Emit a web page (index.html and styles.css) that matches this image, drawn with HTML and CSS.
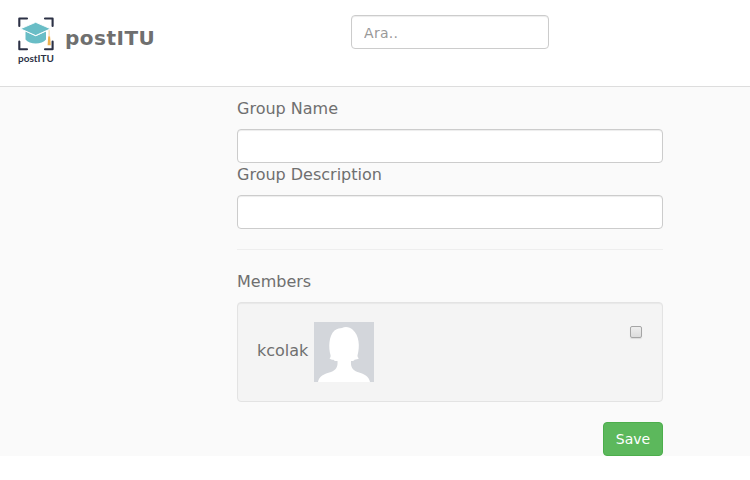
FILE: index.html
```html
<!DOCTYPE html>
<html lang="en">
<head>
<meta charset="utf-8">
<title>postITU</title>
<link rel="stylesheet" href="styles.css">
</head>
<body>
<header class="navbar">
  <a class="brand">
    <svg class="logo" width="38" height="50" viewBox="0 0 38 50">
      <path d="M2.300 10V2.500H10M28 2.500h7.600v7.500M2.300 25.500v7.800H10M28 33.300h7.600v-7.800" fill="none" stroke="#2c3145" stroke-width="2.100" stroke-linecap="round" stroke-linejoin="round"/>
      <path d="M8.500 15.500v8c4 5.200 16.500 5.200 20.500 0v-8l-10.300 4.800z" fill="#69bdc6"/>
      <path d="M3.500 12.800 18.700 6.300 33.500 12.800 18.700 19.600z" fill="#69bdc6" stroke="#fff" stroke-width=".9"/>
      <path d="M32.100 14.200v7" stroke="#f0c98d" stroke-width=".9"/>
      <path d="M31.200 20.500h1.900l.7 8.700h-3.200z" fill="#edb04e"/>
      <text x="1" y="45.800" textLength="36" lengthAdjust="spacingAndGlyphs" class="logo-text">postITU</text>
    </svg>
    <span class="brand-name">postITU</span>
  </a>
  <input class="control search" type="text" placeholder="Ara..">
</header>
<main class="page">
  <form class="group-form">
    <label class="label" for="name">Group Name</label>
    <input class="control" id="name" type="text">
    <label class="label" for="desc">Group Description</label>
    <input class="control" id="desc" type="text">
    <hr class="divider">
    <div class="label">Members</div>
    <div class="well">
      <span class="member-name">kcolak</span>
      <svg class="avatar" width="60" height="60" viewBox="0 0 60 60">
        <path fill="#d3d6db" d="M0 0h60v60H0z"/>
        <path fill="#fff" d="M4 60C5 54 10 52 17 50c5-2 7-5 6.500-11-3 .2-3 0-4-1.200-1.500 0-3-.5-4-1.500 1-.5 1.300-1.800 1-3.300-2-7-2-19 4-24.500C23.500 6 26 6.500 28 6c4-2 8-.5 10.500 1.500 7 6 7.500 17 5 26 0 1.500.5 2.300 1.300 2.800-1 1-2.500 1.400-4.300 1.400-.5 1-1 1.300-3.500 1.300-.5 6 1.500 9 6.500 11C50 52 55 54 56 60z"/>
      </svg>
      <input class="check" type="checkbox" aria-label="kcolak">
    </div>
    <button class="save" type="button">Save</button>
  </form>
</main>
</body>
</html>
```
FILE: styles.css
```css
* { box-sizing: border-box; }
body {
  margin: 0;
  background: #fff;
  color: #6f6f6f;
  font: 16px/22px "DejaVu Sans", sans-serif;
}
.navbar {
  display: flex;
  align-items: flex-start;
  height: 87px;
  padding: 15px 0 0 17px;
  border-bottom: 1px solid #ddd;
}
.brand {
  display: flex;
  width: 334px;
}
.logo {
  display: block;
  margin-top: 1px;
}
.logo-text {
  font: bold 10px Lato, sans-serif;
  fill: #2c3145;
}
.brand-name {
  margin: 12px 0 0 10px;
  font-size: 20px;
  font-weight: bold;
  letter-spacing: .5px;
}
.control {
  display: block;
  width: 100%;
  height: 34px;
  padding: 7px 12px 5px;
  border: 1px solid #ccc;
  border-radius: 4px;
  background: #fff;
  box-shadow: inset 0 1px 1px rgba(0, 0, 0, .075);
  color: #555;
  font: 14px/20px "DejaVu Sans", sans-serif;
}
.control::placeholder { color: #999; opacity: 1; letter-spacing: .3px; }
.search { width: 198px; }
.page {
  height: 369px;
  padding: 10px 87px 0 237px;
  background: #fafafa;
}
.group-form {
  display: flex;
  flex-direction: column;
}
.label {
  height: 32px;
  padding-top: 1px;
}
.divider {
  width: 100%;
  margin: 20px 0;
  border: 0;
  border-top: 1px solid #eee;
}
.well {
  display: flex;
  height: 100px;
  padding: 19px;
  border: 1px solid #e3e3e3;
  border-radius: 4px;
  background: #f4f4f4;
  box-shadow: inset 0 1px 1px rgba(0, 0, 0, .05);
}
.member-name { margin-top: 18px; }
.avatar { margin-left: 6px; }
.check {
  appearance: none;
  width: 12px;
  height: 12px;
  margin: 4px 1px 0 auto;
  border: 1px solid #a5a5a5;
  border-radius: 2px;
  background: linear-gradient(#eee, #dcdcdc);
  box-shadow: 0 1px 1px rgba(0, 0, 0, .1);
}
.save {
  align-self: flex-end;
  width: 60px;
  height: 34px;
  margin-top: 20px;
  padding: 0;
  border: 1px solid #4cae4c;
  border-radius: 4px;
  background: #5cb85c;
  color: #fff;
  font: 14px/20px "DejaVu Sans", sans-serif;
}
```
